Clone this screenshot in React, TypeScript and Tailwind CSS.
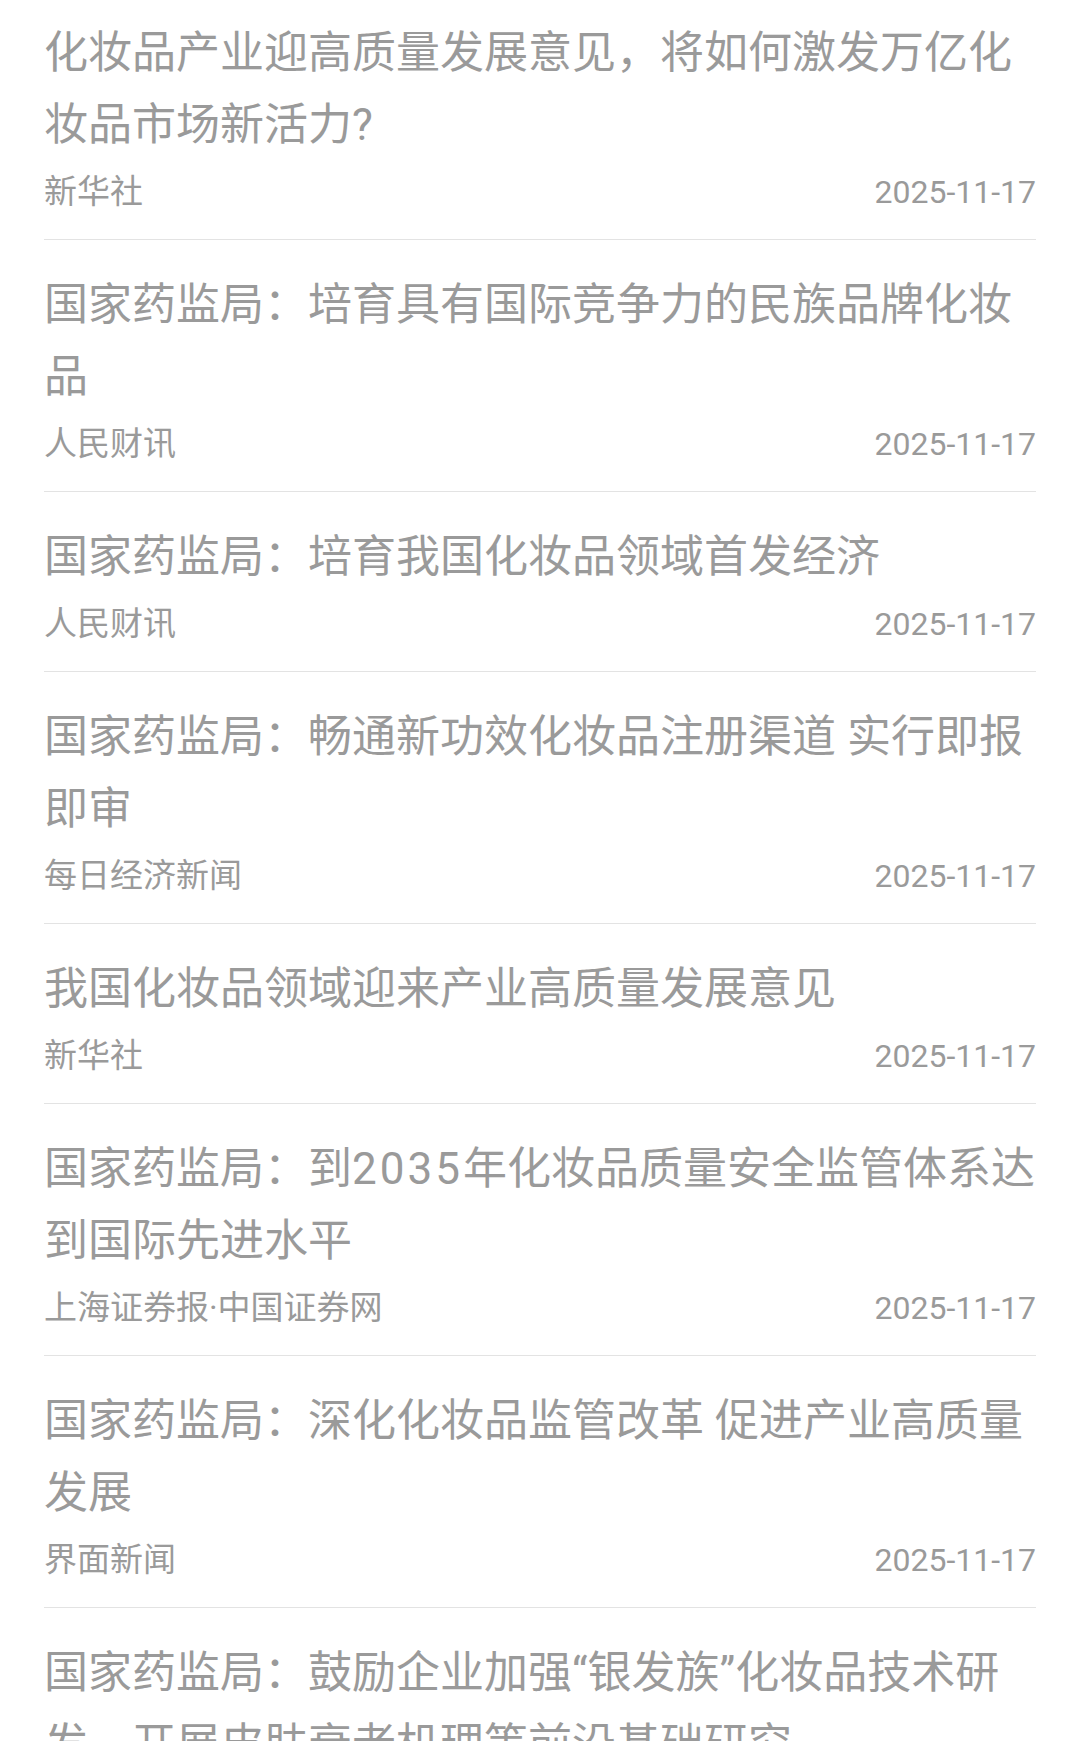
import React from 'react';

type NewsItem = {
  title: string;
  source: string;
  date: string;
};

const news: NewsItem[] = [
  {
    title: '化妆品产业迎高质量发展意见，将如何激发万亿化妆品市场新活力?',
    source: '新华社',
    date: '2025-11-17',
  },
  {
    title: '国家药监局：培育具有国际竞争力的民族品牌化妆品',
    source: '人民财讯',
    date: '2025-11-17',
  },
  {
    title: '国家药监局：培育我国化妆品领域首发经济',
    source: '人民财讯',
    date: '2025-11-17',
  },
  {
    title: '国家药监局：畅通新功效化妆品注册渠道 实行即报即审',
    source: '每日经济新闻',
    date: '2025-11-17',
  },
  {
    title: '我国化妆品领域迎来产业高质量发展意见',
    source: '新华社',
    date: '2025-11-17',
  },
  {
    title: '国家药监局：到2035年化妆品质量安全监管体系达到国际先进水平',
    source: '上海证券报·中国证券网',
    date: '2025-11-17',
  },
  {
    title: '国家药监局：深化化妆品监管改革 促进产业高质量发展',
    source: '界面新闻',
    date: '2025-11-17',
  },
  {
    title: '国家药监局：鼓励企业加强“银发族”化妆品技术研发，开展皮肤衰老机理等前沿基础研究',
    source: '中国证券报',
    date: '2025-11-17',
  },
];

// digits inside titles sit a bit wider in the app font
function Title({ text }: { text: string }) {
  const parts = text.split(/(\d+)/);
  return (
    <h3 className="text-[44px] leading-[72px] font-normal">
      {parts.map((part, i) =>
        /^\d+$/.test(part) ? (
          <span key={i} className="tracking-[3px]">
            {part}
          </span>
        ) : (
          <React.Fragment key={i}>{part}</React.Fragment>
        )
      )}
    </h3>
  );
}

export default function App() {
  return (
    <div
      lang="zh-CN"
      className="min-h-screen bg-white font-['Roboto','Noto_Sans_CJK_SC',sans-serif] text-[#9a9a9a]"
    >
      <ul className="mx-[44px]">
        {news.map((item, index) => (
          <li
            key={index}
            className={`border-b border-[#e3e3e3] pb-[25px] ${index === 0 ? 'pt-[17px]' : 'pt-[29px]'}`}
          >
            <Title text={item.title} />

            {/* Source + date */}
            <div className="mt-[9px] flex items-center justify-between leading-[44px]">
              <span className="text-[33px]">{item.source}</span>
              <span className="text-[32px]">{item.date}</span>
            </div>
          </li>
        ))}
      </ul>
    </div>
  );
}
